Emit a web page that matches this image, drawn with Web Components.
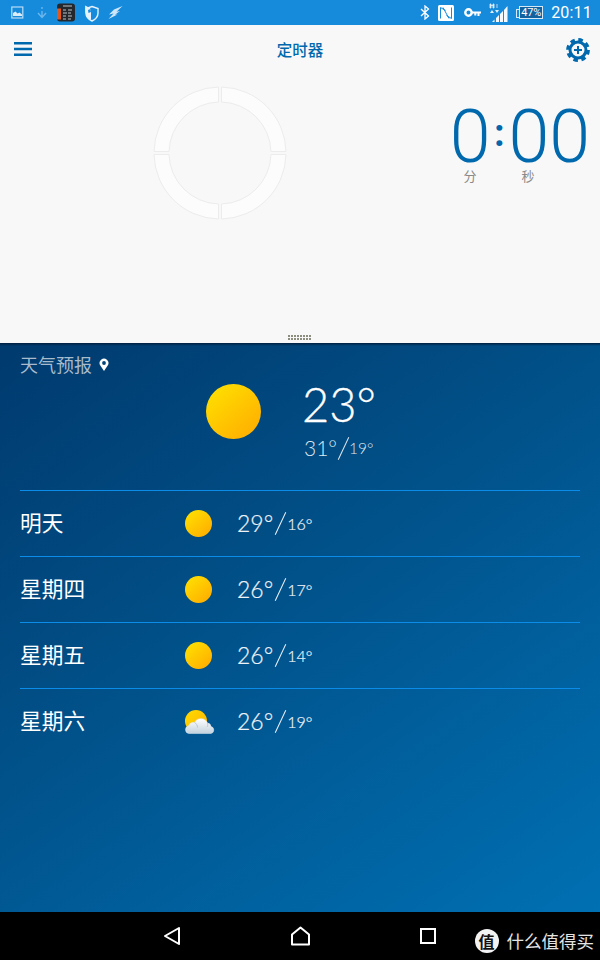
<!DOCTYPE html>
<html lang="zh"><head><meta charset="utf-8"><title>定时器</title>
<style>
html,body{margin:0;padding:0;width:600px;height:960px;overflow:hidden;background:#000;font-family:Roboto,"Noto Sans CJK SC",sans-serif}
body{display:flex;flex-direction:column}
</style></head><body>
<status-bar></status-bar>
<timer-panel></timer-panel>
<weather-panel>
  <forecast-row day="明天" hi="29°" lo="16°"></forecast-row>
  <forecast-row day="星期四" hi="26°" lo="17°"></forecast-row>
  <forecast-row day="星期五" hi="26°" lo="14°"></forecast-row>
  <forecast-row day="星期六" hi="26°" lo="19°" icon="cloud"></forecast-row>
</weather-panel>
<nav-bar></nav-bar>
<script>
const sun=(size,id)=>`<svg width="${size}" height="${size}" viewBox="0 0 54 54" style="display:block"><defs><linearGradient id="${id}" x1="0.15" y1="0.1" x2="0.85" y2="0.9"><stop offset="0" stop-color="#ffdd00"/><stop offset="1" stop-color="#ffb000"/></linearGradient></defs><circle cx="27" cy="27" r="27" fill="url(#${id})"/></svg>`;
class Base extends HTMLElement{
  render(css,html){this.attachShadow({mode:'open'}).innerHTML=`<style>${css}</style>${html}`}
}
customElements.define('status-bar',class extends Base{connectedCallback(){this.render(`
:host{display:flex;align-items:center;height:25px;background:#168bdc;color:#fff;padding:0 8px 0 11px;box-sizing:border-box;flex:none}
svg{display:block;flex:none}
.l{display:flex;align-items:center;gap:0}
.r{margin-left:auto;display:flex;align-items:center}
.bat{position:relative;width:24px;height:13px;margin-left:10px;margin-right:8px;border:1px solid #d5e8f6;box-sizing:border-box;background:#11629f;color:#fff;font:400 11px/11px Roboto,sans-serif;text-align:center;letter-spacing:-.2px}
.bat::before{content:"";position:absolute;left:-4px;top:2px;width:2px;height:7px;border:1px solid #d5e8f6;border-right:0}
.t{font:400 16px/25px Roboto,sans-serif;letter-spacing:.2px}
`,`<div class="l">
<svg width="14" height="14" viewBox="0 0 14 14"><rect x=".8" y="1" width="11" height="11" fill="none" stroke="#b9dcf5" stroke-width="1.2"/><path d="M2 10V7l2.500-1.500 2 2 2-1 2.500 2v1.500z" fill="#d8ecfa"/></svg>
<svg width="14" height="14" viewBox="0 0 14 14" style="margin-left:10px"><path d="M7 1v2M7 5v6M3 7l4 4.500 4-4.500" fill="none" stroke="#6db6ea" stroke-width="1.400"/></svg>
<svg width="18" height="19" viewBox="0 0 18 19" style="margin-left:8px"><rect width="18" height="18" y=".5" rx="3" fill="#24272b"/><rect y="5.500" x="0" width="4" height="11" fill="#e2571e"/><path d="M6 3h9M6 7h3M11 7h4M6 10h4M11 10h3M6 13h3M11 13h4M6 16h3M11 16h3" stroke="#bfc3c6" stroke-width="1"/></svg>
<svg width="17" height="18" viewBox="0 0 17 18" style="margin-left:8px"><path d="M9 2.500l6 2v4.500c0 3.800-2.500 6.300-6 8-3.500-1.700-6-4.200-6-8V4.500z" fill="none" stroke="#e6f2fb" stroke-width="1.400"/><path d="M2 1.500l5 2.500 1 3v9c-3-1.500-5-3.500-5.500-7z" fill="#e6f2fb"/><path d="M5 6l2.500-1 .5 3-2.500 1z" fill="#168bdc"/></svg>
<svg width="15" height="15" viewBox="0 0 15 15" style="margin-left:8px"><path d="M14.500 1L6 4.500 1 9.500l4.500-1L.5 14l9-4.500-2.500.2L12 6l-3.500.8z" fill="#cfe6f8"/></svg>
</div><div class="r">
<svg width="10" height="15" viewBox="0 0 10 15"><path d="M1 4l7.500 7L5 14V1l3.500 3L1 11" fill="none" stroke="#fff" stroke-width="1.300"/></svg>
<svg width="16" height="16" viewBox="0 0 16 16" style="margin-left:8px"><rect width="16" height="16" rx="1.500" fill="#fff"/><path d="M2.500 13.500V2.500l5 3M13.500 2.500v11l-5-3M5 2.500l6 11" fill="none" stroke="#168bdc" stroke-width="1"/></svg>
<svg width="17" height="9" viewBox="0 0 17 9" style="margin-left:10px"><circle cx="4.500" cy="4.500" r="3.200" fill="none" stroke="#fff" stroke-width="2.400"/><path d="M8 3.400h9v2.200h-1.500v2.500h-2V5.600h-1.200v2h-2V5.600H8z" fill="#fff"/></svg>
<svg width="20" height="20" viewBox="0 0 20 20" style="margin-left:8px"><path d="M3 19l2.500-2.500V19zM7 19v-4l3-3v7zM11 19V11l3-3v11zM15 19V7l3.500-4v16z" fill="#f4f9fd"/><path d="M1 1h1v4H1zM4 1h1v4H4zM1 2.500h4M7 2h2M7 4h2" stroke="#e0eefa" stroke-width=".8" fill="#e0eefa"/><path d="M1 10l2-3 2 3zM6 7l2 3 2-3z" fill="#e0eefa"/></svg>
<div class="bat">47%</div>
<div class="t">20:11</div>
</div>`)}});
customElements.define('timer-panel',class extends Base{connectedCallback(){this.render(`
:host{display:block;height:318px;background:#f8f8f8;color:#0069ae;flex:none;position:relative;box-sizing:border-box}
.bar{display:flex;align-items:center;justify-content:space-between;height:48px;padding:0 10px 0 14px}
.title{position:absolute;left:0;right:0;top:0;text-align:center;font:500 15.500px/49px "Noto Sans CJK SC",sans-serif}
.body{display:flex;padding-top:13px;align-items:flex-start}
.dial{margin-left:153px;width:134px;height:134px;flex:none}
.clock{margin-left:auto;margin-right:10px;display:grid;grid-template-columns:auto auto auto;margin-top:18px;font:300 73.500px/66px Roboto,sans-serif}
.clock span{display:block}
.clock .colon{font-size:38px;font-weight:700;line-height:58px;width:18px;text-align:center}
.clock .lab{grid-row:2;font:400 13px/11px "Noto Sans CJK SC",sans-serif;color:#8a8a8a;text-align:center}
.grip{position:absolute;left:288px;bottom:3px;width:24px;display:grid;grid-template-columns:repeat(8,2px);gap:1px;}
.grip i{width:2px;height:2px;background:#8d8d80}
`,`<div class="bar">
<svg width="18" height="16" viewBox="0 0 18 16"><path d="M0 2.200h18M0 8h18M0 13.800h18" stroke="#0069ae" stroke-width="2.400" stroke-linecap="round"/></svg>
<div class="title">定时器</div>
<svg width="24" height="24" viewBox="0 0 24 24" style="margin-top:1px"><circle cx="12" cy="12" r="10.200" fill="none" stroke="#0069ae" stroke-width="3.400" stroke-dasharray="4.500 3.510"/><circle cx="12" cy="12" r="8" fill="none" stroke="#0069ae" stroke-width="3"/><path d="M12 8v8M8 12h8" stroke="#0069ae" stroke-width="2"/></svg>
</div>
<div class="body">
<svg class="dial" viewBox="0 0 134 134"><g fill="#fcfcfc" stroke="#ececec" stroke-width="1"><path d="M68.500 1A66 66 0 0 1 133 65.500H118A51 51 0 0 0 68.500 16z"/><path d="M133 68.500A66 66 0 0 1 68.500 133V118A51 51 0 0 0 118 68.500z"/><path d="M65.500 133A66 66 0 0 1 1 68.500H16A51 51 0 0 0 65.500 118z"/><path d="M1 65.500A66 66 0 0 1 65.500 1V16A51 51 0 0 0 16 65.500z"/></g></svg>
<div class="clock"><span>0</span><span class="colon">:</span><span>00</span><span class="lab">分</span><span class="lab" style="grid-column:3;text-align:left;padding-left:13px">秒</span></div>
</div>
<div class="grip">${'<i></i>'.repeat(16)}</div>`)}});
customElements.define('weather-panel',class extends Base{connectedCallback(){this.render(`
:host{display:block;flex:1;min-height:0;background:linear-gradient(#00203f,rgba(0,32,63,0)) top/100% 3px no-repeat,linear-gradient(145deg,#003a6e 0%,#014c83 35%,#0070b3 100%);color:#fff;padding:0 20px;box-sizing:border-box}
.h{display:flex;align-items:center;gap:7px;height:45px;padding-bottom:2px;box-sizing:border-box;font:400 18px/43px "Noto Sans CJK SC",sans-serif;color:#a7bbcd}
.now{display:flex;height:102px;box-sizing:border-box}
.sun{margin:-4px 0 0 186px}
.temps{margin-left:41px}
.big{font:300 47px/44px Lato,Roboto,sans-serif;margin-top:-6px;-webkit-text-stroke:.3px #fff}
.sub{font:300 21px/28px Lato,Roboto,sans-serif;color:#dfe8f0;margin:8px 0 0 2px;display:flex;align-items:center}
.sub b{font-weight:300;font-size:15.500px}
.sub i{width:1px;height:25px;background:#dfe8f0;transform:rotate(25deg);margin:0 5px 0 6px}
`,`<div class="h">天气预报<svg width="10" height="14" viewBox="0 0 10 14"><path d="M5 13L1.300 7.500A4.400 4.400 0 1 1 8.700 7.500z" fill="#fff"/><circle cx="5" cy="5" r="1.900" fill="#024377"/></svg></div>
<div class="now"><div class="sun">${sun(55,'sunbig')}</div><div class="temps"><div class="big">23°</div><div class="sub">31°<i></i><b>19°</b></div></div></div>
<slot></slot>`)}});
customElements.define('forecast-row',class extends Base{connectedCallback(){
const cloud=`<svg width="32" height="26" viewBox="0 0 32 26" style="display:block;margin-left:-1px"><defs><linearGradient id="cs" x1="0" y1="0" x2="1" y2="1"><stop offset="0" stop-color="#ffdd00"/><stop offset="1" stop-color="#ffb000"/></linearGradient><linearGradient id="cc" x1="0" y1="0" x2="0" y2="1"><stop offset="0" stop-color="#fff"/><stop offset="1" stop-color="#c3d2de"/></linearGradient></defs><circle cx="12" cy="12" r="11" fill="url(#cs)"/><path d="M5 24.500a3.800 3.800 0 0 1-.5-7.500 5 5 0 0 1 6-3.500A7.200 7.200 0 0 1 23.500 14a4 4 0 0 1 3.500 3.500 3.600 3.600 0 0 1 0 7z" fill="url(#cc)" stroke="#dfe8ef" stroke-width=".5"/><path d="M10.500 13.500c2 1 3 3 3 5M23.500 14c.5 1.500.3 3-.5 4" fill="none" stroke="#aebfcc" stroke-width=".8"/></svg>`;
const ic=this.getAttribute('icon')==='cloud'?cloud:sun(27,'s'+Math.random().toString(36).slice(2));
this.render(`
:host{display:flex;align-items:center;height:66px;border-top:1px solid #0a8ce8;box-sizing:border-box}
.d{width:165px;font:400 21.700px/1 "Noto Sans CJK SC",sans-serif;margin-top:-4px}
.i{width:52px}
.t{font:300 23px/1 Lato,Roboto,sans-serif;color:#eef3f8;display:flex;align-items:center;-webkit-text-stroke:.2px #eef3f8}
.t i{width:1px;height:25px;background:#eef3f8;transform:rotate(25deg);margin:0 6px 0 7px}
.t b{font-weight:300;font-size:16px}
`,`<div class="d">${this.getAttribute('day')}</div><div class="i">${ic}</div><div class="t">${this.getAttribute('hi')}<i></i><b>${this.getAttribute('lo')}</b></div>`)}});
customElements.define('nav-bar',class extends Base{connectedCallback(){this.render(`
:host{display:flex;align-items:center;height:48px;background:#000;color:#fff;flex:none;box-sizing:border-box;position:relative}
svg{display:block;flex:none}
.mark{position:absolute;right:6px;bottom:7px;display:flex;align-items:center;gap:8px;font:400 17.500px/24px "Noto Sans CJK SC",sans-serif;color:#e4e4e4}
.seal{width:24px;height:24px;border-radius:50%;background:#f2f2f2;color:#111;font:700 16px/24px "Noto Sans CJK SC",sans-serif;text-align:center}
`,`<svg style="margin-left:163px" width="18" height="20" viewBox="0 0 18 20"><path d="M16 2L2 10l14 8z" fill="none" stroke="#fff" stroke-width="2" stroke-linejoin="round"/></svg>
<svg style="margin-left:109px" width="22" height="20" viewBox="0 0 22 20"><path d="M2 18.500V8.500L10.500 1.500l8.500 7v10z" fill="none" stroke="#fff" stroke-width="2" stroke-linejoin="round"/></svg>
<svg style="margin-left:107px" width="18" height="18" viewBox="0 0 18 18"><rect x="2" y="2" width="14" height="14" fill="none" stroke="#fff" stroke-width="2"/></svg>
<div class="mark"><div class="seal">值</div><span>什么值得买</span></div>`)}});
</script>
</body></html>
